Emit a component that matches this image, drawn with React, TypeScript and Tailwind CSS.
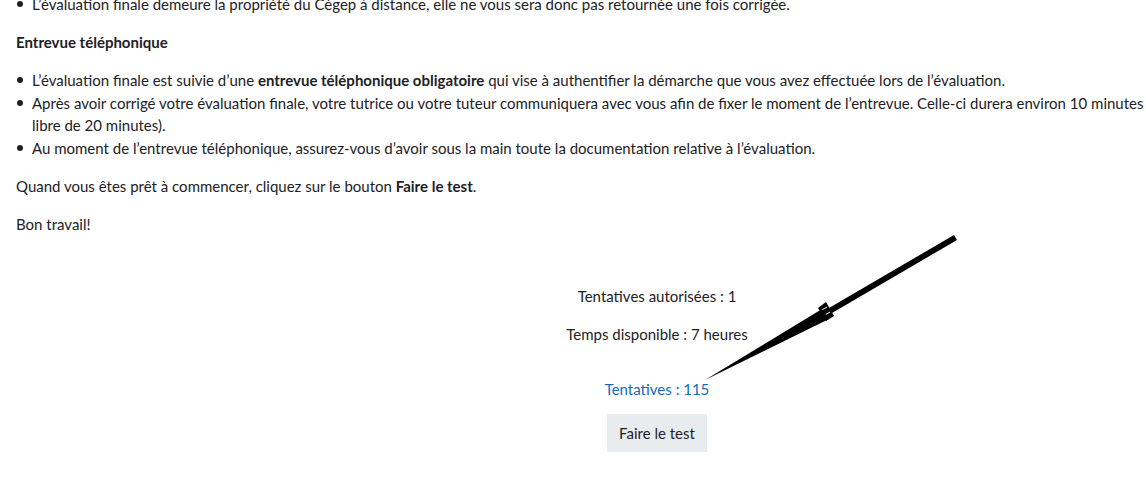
const dot = "mt-[8px] ml-[1px] h-[6px] w-[6px] shrink-0 rounded-full bg-[#1d2125]";

function Bullet({ children, nowrap }: { children: React.ReactNode; nowrap?: boolean }) {
  return (
    <li className="flex">
      <span className="w-[16px] shrink-0">
        <span className={"block " + dot} />
      </span>
      <span className={nowrap ? "whitespace-nowrap" : ""}>{children}</span>
    </li>
  );
}

function Arrow() {
  return (
    <svg
      className="pointer-events-none absolute left-0 top-0"
      width="1146"
      height="491"
      viewBox="0 0 1146 491"
    >
      {/* shaft */}
      <polygon points="954,235 957,240 832,313 829,308" fill="#000" />
      {/* fletching box */}
      <polygon points="818,308 826,302 834,316 826,321" fill="#000" />
      <line x1="820" y1="311" x2="827" y2="307" stroke="#fff" strokeWidth="1" />
      <line x1="823" y1="316" x2="830" y2="312" stroke="#fff" strokeWidth="1" />
      {/* tapering point */}
      <polygon points="822,309 829,319 705,380" fill="#000" />
    </svg>
  );
}

export default function App() {
  return (
    <div
      className="relative h-[491px] w-[1146px] overflow-hidden bg-white text-[15px] leading-[22.5px] text-[#1d2125]"
      style={{ fontFamily: "Lato, 'Liberation Sans', sans-serif" }}
    >
      <div className="-mt-[7px] w-[1314px] px-[16px]">
        <ul>
          <Bullet nowrap>
            L’évaluation finale demeure la propriété du Cégep à distance, elle ne vous sera donc pas retournée une fois corrigée.
          </Bullet>
        </ul>

        <p className="mt-[15.5px] font-bold">Entrevue téléphonique</p>

        <ul className="mt-[15.5px]">
          <Bullet nowrap>
            L’évaluation finale est suivie d’une <b>entrevue téléphonique obligatoire</b> qui vise à authentifier la démarche que vous avez effectuée lors de l’évaluation.
          </Bullet>
          <Bullet nowrap>
            Après avoir corrigé votre évaluation finale, votre tutrice ou votre tuteur communiquera avec vous afin de fixer le moment de l’entrevue. Celle-ci durera environ 10 minutes (après une période de lecture
            <br />
            libre de 20 minutes).
          </Bullet>
          <Bullet nowrap>
            Au moment de l’entrevue téléphonique, assurez-vous d’avoir sous la main toute la documentation relative à l’évaluation.
          </Bullet>
        </ul>

        <p className="mt-[16px]">
          Quand vous êtes prêt à commencer, cliquez sur le bouton <b>Faire le test</b>.
        </p>
        <p className="mt-[15.5px]">Bon travail!</p>

        <div className="mt-[49.5px] flex flex-col items-center">
          <p>Tentatives autorisées : 1</p>
          <p className="mt-[15.5px]">Temps disponible : 7 heures</p>
          <a className="mt-[32.5px] text-[#0f6cbf]" href="#">
            Tentatives : 115
          </a>
          <button className="mt-[13.5px] bg-[#e9ecef] px-[12px] py-[7.5px] text-[#1d2125]">
            Faire le test
          </button>
        </div>
      </div>
      <Arrow />
    </div>
  );
}
